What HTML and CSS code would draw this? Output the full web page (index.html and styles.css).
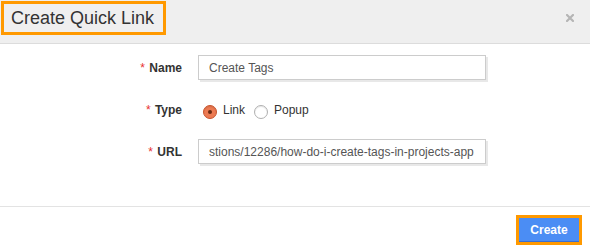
FILE: index.html
```html
<!DOCTYPE html>
<html>
<head>
  <title>Create Quick Link</title>
  <link rel="stylesheet" href="styles.css">
</head>

<body>
  <div class="modal">
    <div class="modal-header">
      <p class="modal-title">Create Quick Link</p>
      <button class="close-button">
        <svg width="8" height="8" viewBox="0 0 8 8"><path d="M1 1L7 7M7 1L1 7" stroke="#b5b5b5" stroke-width="2.2" stroke-linecap="square"/></svg>
      </button>
    </div>

    <div class="modal-body">
      <label class="field-label"><span class="required">*</span> Name</label>
      <input class="text-input" type="text" value="Create Tags">

      <label class="field-label"><span class="required">*</span> Type</label>
      <div class="radio-group">
        <span class="radio radio-checked"></span>
        <span class="radio-text">Link</span>
        <span class="radio"></span>
        <span class="radio-text">Popup</span>
      </div>

      <label class="field-label"><span class="required">*</span> URL</label>
      <input class="text-input" type="text" value="stions/12286/how-do-i-create-tags-in-projects-app">
    </div>

    <div class="modal-footer">
      <button class="create-button">Create</button>
    </div>
  </div>
</body>
</html>
```

FILE: styles.css
```css
body {
  margin: 0;
  padding: 0;
  background-color: #ffffff;
  font-family: 'Liberation Sans', Arial, sans-serif;
}

.modal {
  width: 590px;
  height: 251px;
}

.modal-header {
  background-color: #efefef;
  height: 43px;
  border-bottom: 1px solid #dcdcdc;
  display: flex;
  justify-content: space-between;
  align-items: flex-start;
}

.modal-title {
  margin: 1px 0 0 1px;
  width: 152px;
  height: 28px;
  border: 3px solid #ff9900;
  padding-left: 7px;
  font-size: 18px;
  line-height: 28px;
  color: #333333;
}

.close-button {
  background: none;
  border: none;
  padding: 0;
  margin: 14px 16px 0 0;
  width: 8px;
  height: 8px;
  cursor: pointer;
  display: flex;
}

.modal-body {
  display: grid;
  grid-template-columns: 182px 288px;
  column-gap: 16px;
  row-gap: 16px;
  padding: 11px 0 41px 0;
  border-bottom: 1px solid #e3e3e3;
}

.field-label {
  height: 26px;
  line-height: 26px;
  text-align: right;
  font-size: 12px;
  font-weight: bold;
  color: #333333;
}

.required {
  color: #e8312f;
  font-weight: normal;
  margin-right: 1px;
}

.text-input {
  box-sizing: border-box;
  width: 288px;
  height: 25px;
  border: 1px solid #cccccc;
  box-shadow: 2px 2px 0 #e8e8e8;
  padding: 0 10px;
  font-family: 'Liberation Sans', Arial, sans-serif;
  font-size: 12px;
  color: #555555;
  outline: none;
}

.radio-group {
  display: flex;
  align-items: center;
  height: 26px;
  padding-left: 5px;
}

.radio {
  box-sizing: border-box;
  width: 14px;
  height: 14px;
  border-radius: 50%;
  border: 1px solid #b0b0b0;
  background-color: #ffffff;
  box-shadow: inset 0 1px 1px rgba(0, 0, 0, 0.1);
  margin-top: 3px;
}

.radio-checked {
  border-color: #c7532c;
  background-color: #ec7a52;
  position: relative;
}

.radio-checked::after {
  content: '';
  position: absolute;
  left: 4px;
  top: 4px;
  width: 4px;
  height: 4px;
  border-radius: 50%;
  background-color: #6b2a12;
}

.radio-text {
  font-size: 12px;
  color: #333333;
  margin: 0 9px 0 6px;
}

.modal-footer {
  display: flex;
  justify-content: flex-end;
  padding: 8px 8px 0 0;
}

.create-button {
  width: 66px;
  height: 30px;
  border: 3px solid #ff9900;
  background-color: #4b8df4;
  box-shadow: inset 0 -1px 0 #3a6fd0;
  color: #ffffff;
  font-family: 'Liberation Sans', Arial, sans-serif;
  font-size: 12px;
  font-weight: bold;
  padding: 0;
  cursor: pointer;
}
```
